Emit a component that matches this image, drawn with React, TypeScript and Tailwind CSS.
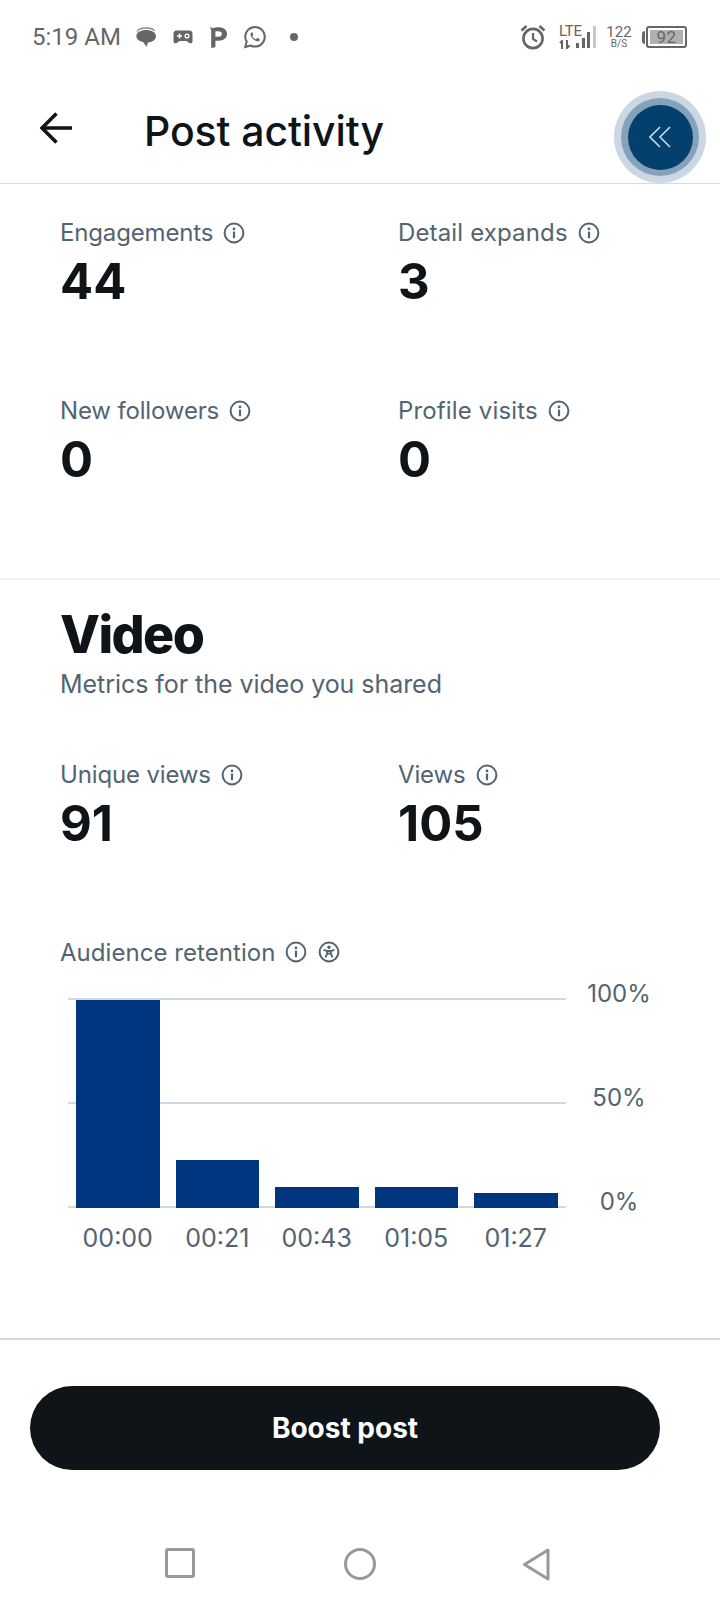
import React from "react";

function InfoIcon() {
  return (
    <svg viewBox="0 0 22 22" className="h-[22px] w-[22px] shrink-0 text-[#536471]">
      <circle cx="11" cy="11" r="9.4" fill="none" stroke="currentColor" strokeWidth="2" />
      <circle cx="11" cy="6.9" r="1.4" fill="currentColor" />
      <rect x="9.9" y="9.6" width="2.2" height="6.6" fill="currentColor" />
    </svg>
  );
}

function AccessIcon() {
  return (
    <svg viewBox="0 0 22 22" className="h-[22px] w-[22px] shrink-0 text-[#536471]">
      <circle cx="11" cy="11" r="9.4" fill="none" stroke="currentColor" strokeWidth="2" />
      <circle cx="11" cy="6.3" r="1.7" fill="currentColor" />
      <path d="M5.6 8.9 L9.2 10 L9.2 12.4 L7.6 16.4 M16.4 8.9 L12.8 10 L12.8 12.4 L14.4 16.4 M9.2 10 H12.8 M9.2 12.6 H12.8" fill="none" stroke="currentColor" strokeWidth="1.9" />
    </svg>
  );
}

function Metric({ label, value, wide }: { label: string; value: string; wide?: boolean }) {
  return (
    <div>
      <div className={`flex h-[30px] items-center gap-[10px] text-[24px] leading-[30px] text-[#536471] ${wide ? "tracking-[0.15px]" : "tracking-[-0.15px]"}`}>
        <span>{label}</span>
        <InfoIcon />
      </div>
      <div className="mt-[8px] h-[52px] text-[49px] leading-[52px] font-bold text-[#0f1419]">{value}</div>
    </div>
  );
}

function StatusBar() {
  return (
    <div className="flex h-[74px] items-center pr-[33px] pl-[32px] font-['Roboto',sans-serif] text-[#666666]">
      <span className="w-[86px] text-[24px] leading-none whitespace-nowrap">5:19 AM</span>
      {/* notification icons */}
      <svg viewBox="0 0 22 22" className="ml-[17px] h-[22px] w-[22px]">
        <path d="M2 5.5 C3.5 2.6 7 2 11 2 C15 2 18.5 3 19.5 5" fill="none" stroke="#8a8a8a" strokeWidth="1.4" />
        <path d="M11 4 C16.5 4 21 6.4 21 10.2 C21 14 16.5 16.4 13 16.4 L11.5 20.8 L8.2 16 C4.5 15.4 1.4 13.4 1.4 10.2 C1.4 6.4 5.5 4 11 4 Z" fill="#666666" />
      </svg>
      <svg viewBox="0 0 20 14" className="ml-[16px] h-[14px] w-[20px]">
        <path d="M3.5 0.5 H16.5 C18.4 0.5 19.5 2 19.5 4 V11 C19.5 13.4 17.5 14 15.5 12.4 L13.5 11 H6.5 L4.5 12.4 C2.5 14 0.5 13.4 0.5 11 V4 C0.5 2 1.6 0.5 3.5 0.5 Z" fill="#666666" />
        <path d="M4 6 H9 M6.5 3.5 V8.5" stroke="#fff" strokeWidth="1.5" />
        <circle cx="14" cy="6" r="1.9" fill="none" stroke="#fff" strokeWidth="1.3" />
      </svg>
      <svg viewBox="0 0 17 21" className="ml-[17px] h-[21px] w-[17px]">
        <path d="M0 0 L3 1.3 C4.5 0.6 6.5 0.3 8.5 0.3 C13.5 0.3 17 3 17 7 C17 11 13.5 13.7 8.5 13.7 H5.4 V20.2 L1.2 21 V3 Z M5.4 4.3 V9.7 H8.3 C10.6 9.7 11.9 8.6 11.9 7 C11.9 5.4 10.6 4.3 8.3 4.3 Z" fill="#666666" fillRule="evenodd" />
      </svg>
      <svg viewBox="0 0 24 24" className="ml-[16px] h-[24px] w-[24px]">
        <path d="M2.2 22 L3.7 16.6 C2.7 15 2.2 13.4 2.2 11.8 C2.2 6.4 6.6 2 12 2 C17.4 2 21.8 6.4 21.8 11.8 C21.8 17.2 17.4 21.6 12 21.6 C10.3 21.6 8.8 21.2 7.4 20.5 Z" fill="none" stroke="#666666" strokeWidth="2" />
        <path d="M8.8 7.2 C8.2 7.4 7.4 8.3 7.5 9.7 C7.7 11.6 10.6 15.4 14.2 16.3 C15.6 16.6 16.6 15.7 16.8 14.7 C16.9 14.2 16.7 14.1 16.3 13.9 L14.7 13.1 C14.3 12.9 14.1 13 13.9 13.3 L13.2 14.1 C13 14.3 12.8 14.4 12.4 14.2 C11 13.6 10.1 12.6 9.5 11.6 C9.3 11.2 9.4 11 9.6 10.8 L10.1 10.2 C10.3 9.9 10.3 9.7 10.2 9.4 L9.5 7.7 C9.3 7.2 9.1 7.1 8.8 7.2 Z" fill="#666666" />
      </svg>
      <span className="ml-[23px] h-[8px] w-[8px] rounded-full bg-[#666666]" />
      <div className="flex-1" />
      {/* system icons */}
      <svg viewBox="0 0 26 26" className="ml-[2px] h-[26px] w-[26px]">
        <circle cx="13" cy="14.5" r="9.6" fill="none" stroke="#666666" strokeWidth="2.6" />
        <path d="M13 9 V15 L17 17.5" fill="none" stroke="#666666" strokeWidth="2.2" />
        <path d="M1.5 6.5 L6.5 2 M24.5 6.5 L19.5 2" stroke="#666666" strokeWidth="2.6" />
      </svg>
      <div className="ml-[13px] flex h-[24px] w-[37px] items-start">
        <div className="flex w-[21px] flex-col">
          <span className="text-[15px] leading-[13px] tracking-[-0.3px]">LTE</span>
          <svg viewBox="0 0 12 9" className="mt-[2px] h-[9px] w-[12px]">
            <path d="M3 9 V1 L1 3 M8 0 V8 L10.5 5.5" fill="none" stroke="#666666" strokeWidth="2" />
          </svg>
        </div>
        <svg viewBox="0 0 20 24" className="-ml-[4px] h-[24px] w-[20px]">
          <rect x="0" y="18" width="3" height="5" fill="#666666" />
          <rect x="6" y="13" width="3" height="10" fill="#666666" />
          <rect x="11" y="7" width="3" height="16" fill="#666666" />
          <rect x="17" y="1" width="3" height="22" fill="#c8c8c8" />
        </svg>
      </div>
      <div className="ml-[11px] flex w-[24px] flex-col items-center">
        <span className="text-[15px] leading-[14px]">122</span>
        <span className="text-[10px] leading-[10px]">B/S</span>
      </div>
      <div className="ml-[11px] h-[13px] w-[3px] rounded-l-sm bg-[#666666]" />
      <div className="ml-[1px] flex h-[22px] w-[41px] items-stretch rounded-[3px] border-2 border-[#666666] p-[2px]">
        <div className="flex flex-1 items-center justify-center bg-[#b0b0b0] text-[17px] leading-none tracking-[0.5px]">92</div>
      </div>
    </div>
  );
}

const bars = [
  { label: "00:00", height: "h-[208px]" },
  { label: "00:21", height: "h-[48px]" },
  { label: "00:43", height: "h-[21px]" },
  { label: "01:05", height: "h-[21px]" },
  { label: "01:27", height: "h-[15px]" },
];

function RetentionChart() {
  return (
    <div className="mt-[30px] ml-[8px] flex">
      <div className="w-[498px]">
        <div className="relative h-[210px]">
          <div className="absolute inset-x-0 top-0 h-[2px] bg-[#cfd9de]" />
          <div className="absolute inset-x-0 top-[104px] h-[2px] bg-[#cfd9de]" />
          <div className="absolute inset-x-0 top-[208px] h-[2px] bg-[#cfd9de]" />
          <div className="relative flex h-[210px] items-end gap-[16px] px-[8px]">
            {bars.map((bar) => (
              <div key={bar.label} className={`w-[83.5px] bg-[#00367f] ${bar.height}`} />
            ))}
          </div>
        </div>
        <div className="mt-[15px] flex gap-[16px] px-[8px]">
          {bars.map((bar) => (
            <div key={bar.label} className="w-[83.5px] text-center text-[25px] leading-[30px] text-[#536471]">
              {bar.label}
            </div>
          ))}
        </div>
      </div>
      <div className="-mt-[19px] ml-[9px] flex h-[238px] w-[88px] flex-col justify-between text-center text-[24px] leading-[30px] text-[#536471]">
        <span>100%</span>
        <span>50%</span>
        <span>0%</span>
      </div>
    </div>
  );
}

export default function App() {
  return (
    <div className="relative flex h-[1612px] w-[720px] flex-col overflow-hidden bg-white font-['Inter',sans-serif]">
      <StatusBar />

      {/* Header */}
      <div className="flex h-[110px] items-center border-b border-[#d4dade] pl-[40px]">
        <svg viewBox="0 0 32 32" className="h-[32px] w-[32px] -translate-y-[1px]">
          <path d="M32 16 H2.5 M16.5 1.5 L2 16 L16.5 30.5" fill="none" stroke="#0f1419" strokeWidth="3.6" />
        </svg>
        <h1 className="ml-[72px] translate-y-[3px] text-[41px] leading-none font-medium tracking-[-0.1px] text-[#0f1419]">Post activity</h1>
      </div>
      <div className="absolute top-[91px] left-[614px] flex h-[92px] w-[92px] items-center justify-center rounded-full bg-[#cbd8e3]">
        <div className="flex h-[78px] w-[78px] items-center justify-center rounded-full bg-[#86a2ba]">
          <div className="flex h-[65px] w-[65px] items-center justify-center rounded-full bg-[#03406e]">
            <svg viewBox="0 0 22 22" className="h-[22px] w-[22px]">
              <path d="M11 1 L1 11 L11 21 M21 1 L11 11 L21 21" fill="none" stroke="#cbd8e3" strokeWidth="1.6" />
            </svg>
          </div>
        </div>
      </div>

      {/* Stats */}
      <div className="grid grid-cols-[338px_1fr] gap-y-[88px] pt-[34px] pl-[60px]">
        <Metric label="Engagements" value="44" />
        <Metric label="Detail expands" value="3" wide />
        <Metric label="New followers" value="0" />
        <Metric label="Profile visits" value="0" wide />
      </div>
      <div className="mt-[92px] h-[2px] bg-[#eff3f4]" />

      {/* Video */}
      <div className="pl-[60px]">
        <h2 className="mt-[26px] text-[52px] leading-[58px] font-extrabold tracking-[-1.6px] text-[#0f1419]">Video</h2>
        <p className="mt-[5px] text-[25px] leading-[30px] tracking-[-0.05px] text-[#536471]">Metrics for the video you shared</p>
        <div className="mt-[61px] grid grid-cols-[338px_1fr]">
          <Metric label="Unique views" value="91" />
          <Metric label="Views" value="105" />
        </div>
        <div className="mt-[88px] flex h-[30px] items-center text-[24px] leading-[30px] tracking-[0.05px] text-[#536471]">
          <span>Audience retention</span>
          <span className="ml-[10px] -translate-y-[1px]"><InfoIcon /></span>
          <span className="ml-[11px] -translate-y-[1px]"><AccessIcon /></span>
        </div>
        <RetentionChart />
      </div>

      <div className="flex-1" />

      {/* Footer */}
      <div className="h-[2px] bg-[#cfd9de]" />
      <div className="pt-[46px] pl-[30px]">
        <button className="h-[84px] w-[630px] rounded-full bg-[#0f1419] text-[28px] font-bold text-white">Boost post</button>
      </div>
      <div className="flex h-[142px] items-start pt-[78px] pl-[165px]">
        <div className="h-[30px] w-[30px] rounded-[3px] border-[3px] border-[#999999]" />
        <div className="ml-[149px] h-[32px] w-[32px] rounded-full border-[3px] border-[#999999]" />
        <svg viewBox="0 0 28 33" className="ml-[146px] h-[33px] w-[28px]">
          <path d="M26 2 L2.5 16.5 L26 31 Z" fill="none" stroke="#999999" strokeWidth="3" strokeLinejoin="round" />
        </svg>
      </div>
    </div>
  );
}
